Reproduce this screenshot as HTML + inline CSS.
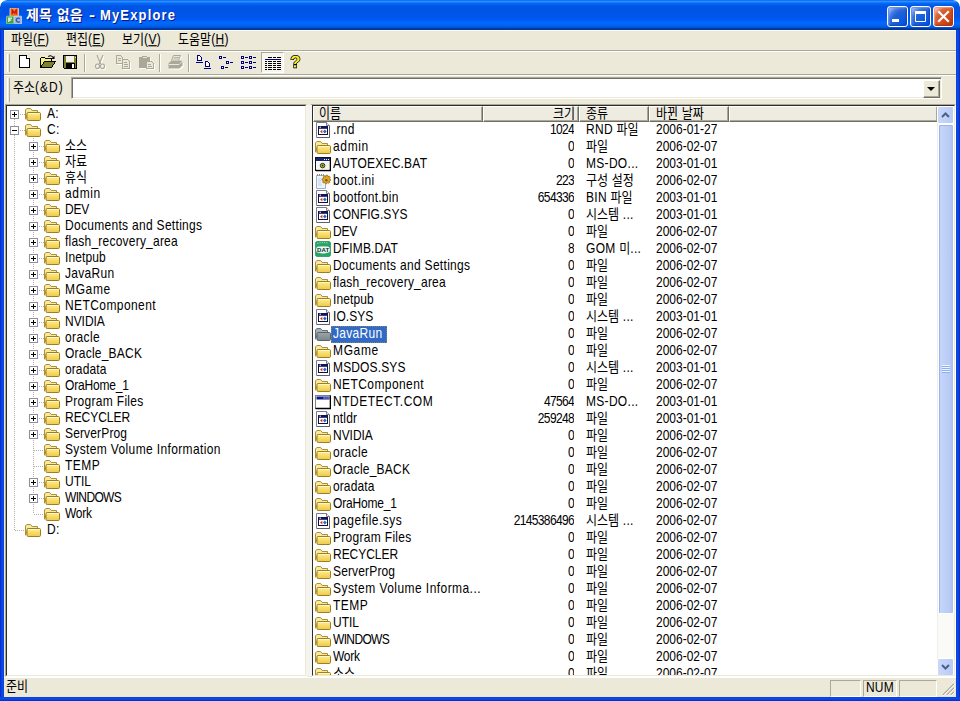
<!DOCTYPE html>
<html lang="ko">
<head>
<meta charset="utf-8">
<title>제목 없음 - MyExplore</title>
<style>
html,body{margin:0;padding:0;background:#fff}
body{width:960px;height:701px;overflow:hidden;position:relative;font-family:"Liberation Sans","Noto Sans CJK KR",sans-serif;font-size:12px;line-height:14px;color:#000;letter-spacing:.3px}
.l{display:inline-block;white-space:pre;line-height:14px;transform:scaleY(1.18);transform-origin:0 11.2px}
svg{display:block;overflow:visible}
#defs{position:absolute;width:0;height:0}
.kt{display:inline-block;white-space:pre;font-family:"Liberation Sans","Noto Sans CJK KR",sans-serif;font-size:12px;line-height:14px;letter-spacing:0;transform:scaleY(1.12);transform-origin:0 11px}
.ks{font-size:0;letter-spacing:0}
#win{position:absolute;left:0;top:0;width:960px;height:701px;background:#ECE9D8;overflow:hidden;border-radius:7px 7px 0 0}
#win>div{position:absolute}
/* frame */
#fl{left:0;top:30px;width:4px;height:671px;background:linear-gradient(90deg,#0527C8 0,#0A3FDF 30%,#0B4BEA 60%,#0840DA 100%)}
#fr{left:956px;top:30px;width:4px;height:671px;background:linear-gradient(90deg,#0840DA 0,#0B4BEA 40%,#0A3FDF 70%,#0527C8 100%)}
#fb{left:0;top:697px;width:960px;height:4px;background:linear-gradient(180deg,#0840DA 0,#0B4BEA 40%,#0A3FDF 70%,#0527C8 100%)}
/* title bar */
#tb{left:0;top:0;width:960px;height:30px;border-radius:7px 7px 0 0;
background:linear-gradient(180deg,#0058EE 0%,#3593FF 4%,#288EFF 6%,#127DFF 8%,#036FFC 10%,#0262EE 14%,#0057E5 20%,#0054E3 24%,#0055EB 56%,#005BF5 66%,#026AFE 76%,#0062EF 86%,#0052D6 92%,#0040AB 94%,#003092 100%)}
#tb .app{position:absolute;left:6px;top:8px}
#tb h1{position:absolute;left:26px;top:7px;margin:0;font-size:13px;line-height:18px;font-weight:bold;color:#fff;white-space:nowrap;letter-spacing:1.15px;text-shadow:1px 1px 0 #0A1883}
#tb h1 .l{line-height:16px;transform:scaleY(1.1);transform-origin:0 12px;margin-left:6px}
#tb h1 .kt{font-size:14px;line-height:16px;font-weight:bold;letter-spacing:0;transform:none}
#tb h1 .ks+.kt{margin-left:5px}
#tb h1 .hy{transform:scale(1.4,1.1);transform-origin:0 12px;margin-right:0}
.cb{position:absolute;top:6px;width:21px;height:21px;box-sizing:border-box;border:1px solid #fff;border-radius:3px;
background:radial-gradient(circle at 90% 90%,#0054E9 0%,#2263D5 55%,#4479E4 70%,#A3BBEC 90%,#fff 100%);box-shadow:inset -1px -1px 2px #1840B8,inset 1px 1px 1px #6C95F0}
.cb.min{left:887px}.cb.max{left:910px}
.cb.cls{left:933px;background:radial-gradient(circle at 90% 90%,#C53A0A 0%,#DA5523 55%,#D46A42 70%,#FFC6AE 90%,#fff 100%);box-shadow:inset -1px -1px 2px #B03010,inset 1px 1px 1px #F0A080}
.cb svg{position:absolute;left:0;top:0}
/* menu */
#mb{left:4px;top:30px;width:952px;height:20px;box-shadow:inset 0 1px 0 #fff}
#mb>span{position:absolute;top:2px;white-space:nowrap}
/* bars */
.etch{left:4px;width:952px;height:1px;background:#ACA899;box-shadow:0 1px 0 #fff}
.grip{position:absolute;left:3px;width:1px;background:#fff;box-shadow:2px 0 0 #ACA899,1px 0 0 #ECE9D8}
#tool{left:4px;top:52px;width:952px;height:22px}
#tool svg{position:absolute}
.pressed{position:absolute;top:0;width:23px;height:21px;box-sizing:border-box;background:#F6F5EE;border:1px solid;border-color:#ACA899 #fff #fff #ACA899}
.sep{position:absolute;top:2px;width:1px;height:18px;background:#ACA899;box-shadow:1px 0 0 #fff}
#addr{left:4px;top:76px;width:952px;height:28px}
#addr label{position:absolute;left:9px;top:5px;white-space:nowrap}
#addr label .l{letter-spacing:1px}
u{text-decoration-thickness:1px;text-underline-offset:1.3px}
#mb .l{position:relative;top:1px}#mb .kt{position:relative;top:1px}
#combo{position:absolute;left:67px;top:1px;width:871px;height:22px;box-sizing:border-box;background:#fff;border:1px solid;border-color:#ACA899 #fff #fff #ACA899;box-shadow:inset 1px 1px 0 #716F64,inset -1px -1px 0 #ECE9D8}
#combo b{position:absolute;right:1px;top:2px;width:15px;height:16px;background:#ECE9D8;border:1px solid;border-color:#fff #716F64 #716F64 #fff;box-shadow:inset -1px -1px 0 #ACA899}
#combo b:after{content:"";position:absolute;left:3px;top:6px;border:4px solid transparent;border-top-color:#000;border-bottom:0}
/* panes */
.pane{box-sizing:border-box;background:#fff;border:1px solid;border-color:#ACA899 #fff #fff #ACA899;overflow:hidden}
.pane>.in{position:absolute;left:0;top:0;right:0;bottom:0;border:1px solid;border-color:#2E2D29 #ECE9D8 #ECE9D8 #2E2D29;overflow:hidden}
#tree{left:5px;top:104px;width:302px;height:573px}
#list{left:311px;top:104px;width:645px;height:573px}
.trow{position:relative;height:16px;white-space:nowrap}
.trow>span{position:absolute;top:0}
.xb{top:4px!important;width:9px;height:9px;box-sizing:border-box;border:1px solid #8F909C;background:#fff}
.xb .h{position:absolute;left:1px;top:3px;width:5px;height:1px;background:#000}
.xb .v{position:absolute;left:3px;top:1px;width:1px;height:5px;background:#000}
.tt{top:1px!important;line-height:14px}
.tl{position:absolute;background-image:linear-gradient(#B0B0B0 50%,transparent 50%);background-size:1px 2px;width:1px}
.thl{position:absolute;height:1px;background-image:linear-gradient(90deg,#B0B0B0 50%,transparent 50%);background-size:2px 1px}
/* list */
#hdr{position:absolute;left:0;top:0;width:625px;height:16px;background:#EEECE1}
#hdr>span{position:absolute;top:0;height:16px;line-height:14px;padding-top:0;box-sizing:border-box;border:1px solid;border-color:#fff #716F64 #716F64 #fff;box-shadow:inset -1px -1px 0 #ACA899;white-space:nowrap}
#rows{position:absolute;left:0;top:16px;width:626px}
.lrow{position:relative;height:17px;white-space:nowrap;line-height:14px}
.lrow>span{position:absolute;top:0;height:17px;overflow:hidden;padding-top:1px;box-sizing:border-box}
.li{left:2px;padding:0!important}
.c1{left:18px;width:152px}.c1{padding:0!important}.c1 .nm{display:inline-block;padding:1px 5px 0 2px;height:17px;box-sizing:border-box}
.c2{left:170px;width:91px;text-align:right;letter-spacing:-.65px}
.c3{left:273px;width:60px}
.c4{left:343px;width:75px;letter-spacing:0}
.sel .nm{background:#316AC5;color:#fff;outline:1px dotted rgba(206,149,58,.55);outline-offset:-1px}
/* scrollbar */
#sb{position:absolute;right:0;top:0;width:17px;bottom:0;background:#FAFAF6;box-shadow:inset 1px 0 0 #F0EFE8}
.sbtn{position:absolute;left:1px;width:15px;height:16px;border-radius:2px;background:linear-gradient(90deg,#C9D7FB,#B9CBF5);border:1px solid #fff;box-sizing:content-box;margin:-1px 0 0 -1px}
#thumb{position:absolute;left:1px;top:18px;width:14px;height:488px;border-radius:2px;background:linear-gradient(90deg,#C8D6FB,#B7CAF5 80%,#A9BEEF);border:1px solid #fff;box-shadow:1px 1px 0 #9DB4E8 inset}
#thumb i{position:absolute;left:3px;top:240px;width:8px;height:8px;background:linear-gradient(#EEF4FE 50%,#8CB0F8 50%);background-size:8px 2px}
#split{left:306px;top:105px;width:6px;height:571px;background:#F5F4EE}
/* status */
#st{left:4px;top:677px;width:952px;height:20px;box-shadow:inset 0 1px 0 #fff}
#st .p{position:absolute;top:3px;height:17px;box-sizing:border-box;border:1px solid;border-color:#ACA899 #fff #fff #ACA899}
#st .t{position:absolute;left:2px;top:3px}
</style>
</head>
<body>
<svg id="defs" aria-hidden="true"><defs>
<linearGradient id="gf" x1="0" y1="0" x2="0" y2="1"><stop offset="0" stop-color="#FDEF8E"/><stop offset="1" stop-color="#EFC84A"/></linearGradient>
<linearGradient id="gfs" x1="0" y1="0" x2="0" y2="1"><stop offset="0" stop-color="#9AA6A8"/><stop offset="1" stop-color="#7A878A"/></linearGradient>
<radialGradient id="gdat" cx=".5" cy=".55" r=".45"><stop offset="0" stop-color="#fff"/><stop offset=".6" stop-color="#E6F8EE"/><stop offset="1" stop-color="#2FA868" stop-opacity="0"/></radialGradient>
<symbol id="i-fold" viewBox="0 0 16 16">
 <path d="M.5 13.2V4L1.8 2.5H5.6L7.2 4.5H12.5V6.5H3Z" fill="#F9EAA2" stroke="#AC8E34"/>
 <rect x="2" y="6.5" width="13.5" height="8" rx="1.2" fill="url(#gf)" stroke="#9E7E22"/>
 <path d="M3 7.5H14.5" stroke="#FFFCD8" opacity=".8"/>
</symbol>
<symbol id="i-folds" viewBox="0 0 16 16">
 <path d="M.5 13.2V4L1.8 2.5H5.6L7.2 4.5H12.5V6.5H3Z" fill="#A7B2B4" stroke="#677079"/>
 <rect x="2" y="6.5" width="13.5" height="8" rx="1.2" fill="url(#gfs)" stroke="#5A636B"/>
</symbol>
<symbol id="i-sys" viewBox="0 0 16 16">
 <path d="M1.5 .5H11.5L14.5 3.5V15.5H1.5Z" fill="#fff" stroke="#7C7C8C"/>
 <path d="M11.5 .5V3.5H14.5" fill="#F0F0F0" stroke="#7C7C8C"/>
 <path d="M14.5 4V15.5H2" fill="none" stroke="#5E5E6C"/>
 <rect x="3.5" y="4.5" width="9" height="8" fill="#fff" stroke="#101038"/>
 <rect x="3" y="4" width="10" height="2.8" fill="#121458"/>
 <rect x="4.6" y="4.6" width="1.2" height="1.2" fill="#fff"/>
 <path d="M7.4 7.8L5 9.6L7.4 11.4Z" fill="#D23A1E"/><path d="M9.8 7.6L11.7 9.6L9.8 11.6L8 9.6Z" fill="#2A62C8"/>
</symbol>
<symbol id="i-bat" viewBox="0 0 16 16">
 <rect x=".5" y="1.5" width="15" height="13" fill="#fff" stroke="#111"/>
 <path d="M1 14.5H16M15.5 2V15" stroke="#000" stroke-width="1.6"/>
 <rect x="1" y="2" width="14" height="3" fill="#1A2478"/>
 <path d="M9 3.5h1M11 3.5h1M13 3.5h1" stroke="#fff"/>
 <rect x="2" y="6" width="12" height="7.5" fill="#F4F4F0"/>
 <circle cx="7.6" cy="9.6" r="2.3" fill="#A9B82C" stroke="#1E2C08" stroke-width=".9"/><circle cx="7.6" cy="9.6" r=".8" fill="#1A2406"/>
</symbol>
<symbol id="i-ini" viewBox="0 0 16 16">
 <path d="M1.5 2.5H10.5V15.5H1.5Z" fill="#EEF4FB" stroke="#9DB3CC"/>
 <path d="M3 6H9M3 8H7M3 10H6M3 12H7" stroke="#C4D4E8"/>
 <path d="M2.5 1V3M4.5 1V3M6.5 1V3M8.5 1V3" stroke="#A08A78"/>
 <g transform="translate(11.3 7.3) scale(1.15) translate(-11 -8.6)"><path d="M11.2 4l1 .2.3 1.2 1.2-.3.7.8-.6 1.1 1 .7-.1 1-1.1.5.4 1.1-.8.8-1.1-.5-.7 1h-1l-.6-1-1.2.4-.7-.8.5-1.1-1-.7.1-1 1.1-.5-.3-1.2.8-.7 1.1.5z" fill="#DDA52A" stroke="#9A6A10" stroke-width=".7"/>
 <circle cx="11" cy="8.6" r="1.1" fill="#8A5A08"/></g>
</symbol>
<symbol id="i-dat" viewBox="0 0 16 16">
 <rect x=".3" y=".3" width="15.4" height="15.4" rx="2.6" fill="#27A566" stroke="#178A50" stroke-width=".6"/>
 <path d="M2.3 2.3h1M4.6 1.8h1M6.9 1.6h1M9.2 1.6h1M11.5 1.9h1" stroke="#B9F4D6" stroke-width=".9"/>
 <ellipse cx="8" cy="8.8" rx="7.3" ry="5" fill="url(#gdat)"/>
 <rect x="1.2" y="5.6" width="13.6" height="6.2" rx="2.5" fill="#F4FCF7"/>
 <text x="8.15" y="11.1" font-size="6.1" font-weight="bold" text-anchor="middle" letter-spacing="0" fill="#062A1A" style="font-family:'Liberation Sans',sans-serif">DAT</text>
</symbol>
<symbol id="i-com" viewBox="0 0 16 16">
 <rect x=".5" y="1.5" width="15" height="13" fill="#fff" stroke="#808080"/>
 <path d="M.5 14.5H16M15.5 1.5V15" stroke="#000" stroke-width="1.6"/>
 <rect x="1.5" y="2.5" width="13" height="3" fill="#0A1A88"/>
 <path d="M8.5 4h1.2M10.5 4h1.2M12.5 4h1.2" stroke="#fff" stroke-width="1.1"/>
</symbol>
<symbol id="i-mfc" viewBox="0 0 16 16">
 <rect x="4" y="0" width="8.5" height="8.5" rx="1" fill="#E8782A" stroke="#F8D8B8" stroke-width=".8"/>
 <path d="M6.2 6.5V2.3L8.2 5l2-2.7V6.5" fill="none" stroke="#D01010" stroke-width="1.3"/>
 <rect x=".4" y="8.2" width="7.6" height="7.6" rx="1" fill="#3FA24A" stroke="#A8D8A8" stroke-width=".8"/>
 <path d="M2.8 14V10.2H6M2.8 12h2.4" fill="none" stroke="#E8F8E0" stroke-width="1.3"/>
 <rect x="8.2" y="8.2" width="7.6" height="7.6" rx="1" fill="#9FB4D8" stroke="#D8E0F0" stroke-width=".8"/>
 <path d="M13.8 10.7Q12 9.6 10.8 10.8T10.8 13.4T13.8 13.4" fill="none" stroke="#2858B8" stroke-width="1.3"/>
</symbol>
</defs></svg>
<div id="win">
 <div id="tb">
  <svg class="app" width="16" height="16"><use href="#i-mfc"/></svg>
  <h1><span class="kt">제목</span><span class="ks"> </span><span class="kt">없음</span><span class="ks"> </span><span class="l hy">-</span><span class="ks"> </span><span class="l">MyExplore</span></h1>
  <div class="cb min"><svg width="19" height="19"><rect x="4" y="12" width="7" height="3" fill="#fff"/></svg></div>
  <div class="cb max"><svg width="19" height="19"><path d="M4.5 5.5h10v9h-10z M4.5 6.5h10" fill="none" stroke="#fff" stroke-width="1"/><rect x="4" y="4" width="11" height="3" fill="#fff"/></svg></div>
  <div class="cb cls"><svg width="19" height="19"><path d="M5 5l9 9M14 5l-9 9" stroke="#fff" stroke-width="2.2" stroke-linecap="square"/></svg></div>
 </div>
 <div id="fl"></div><div id="fr"></div><div id="fb"></div>
 <div id="mb">
  <span style="left:7px"><span class="kt">파일</span><span class="l">(<u>F</u>)</span></span>
  <span style="left:62px"><span class="kt">편집</span><span class="l">(<u>E</u>)</span></span>
  <span style="left:118px"><span class="kt">보기</span><span class="l">(<u>V</u>)</span></span>
  <span style="left:174px"><span class="kt">도움말</span><span class="l">(<u>H</u>)</span></span>
 </div>
 <div class="etch" style="top:50px"></div>
 <div id="tool">
  <i class="grip" style="top:2px;height:18px"></i>
  <svg style="left:13px;top:3px" width="16" height="15" shape-rendering="crispEdges"><path d="M2.5 .5H9.5L12.5 3.5V12.5H2.5Z" fill="#fff" stroke="#000"/><path d="M9.5 .5V3.5H12.5" fill="#fff" stroke="#000"/></svg><svg style="left:36px;top:3px" width="16" height="15" shape-rendering="crispEdges"><path d="M.5 12.5V3.5L1.5 2.5H4.5L5.5 3.5H11.5V6.5H4.5L.5 12.5" fill="#F4F07A" stroke="#000"/><path d="M.5 12.5L4.5 6.5H15.5L11.5 12.5Z" fill="#80802A" stroke="#000"/></svg><svg style="left:36px;top:3px" width="16" height="15"><path d="M8.3 1.6Q10.5 -.3 13.2 2.3" fill="none" stroke="#000" stroke-width="1.1"/><path d="M14.5 .8V4H11.3Z" fill="#000"/></svg><svg style="left:59px;top:3px" width="16" height="15" shape-rendering="crispEdges"><path d="M.5 .5H13.5V13.5H1.5L.5 12.5Z" fill="#80802A" stroke="#000"/><rect x="3" y="1" width="8" height="6" fill="#F2F2EA"/><rect x="11.5" y="1.5" width="1" height="1" fill="#E8E8D8"/><rect x="3" y="8" width="9" height="5" fill="#000"/><rect x="9" y="9" width="2" height="3.5" fill="#fff"/></svg><i class="sep" style="left:80px"></i><svg style="left:88px;top:3px" width="17" height="16"><g transform="translate(1,1)" style="color:#fff"><path d="M5 0L8.8 9M11 0L7.2 9" fill="none" stroke="currentColor" stroke-width="1.2"/><ellipse cx="5.5" cy="11.3" rx="2" ry="2.3" fill="none" stroke="currentColor" stroke-width="1.2"/><ellipse cx="10.5" cy="11.3" rx="2" ry="2.3" fill="none" stroke="currentColor" stroke-width="1.2"/></g><g style="color:#ACA899"><path d="M5 0L8.8 9M11 0L7.2 9" fill="none" stroke="currentColor" stroke-width="1.2"/><ellipse cx="5.5" cy="11.3" rx="2" ry="2.3" fill="none" stroke="currentColor" stroke-width="1.2"/><ellipse cx="10.5" cy="11.3" rx="2" ry="2.3" fill="none" stroke="currentColor" stroke-width="1.2"/></g></svg><svg style="left:111px;top:3px" width="17" height="16" shape-rendering="crispEdges"><g transform="translate(1,1)" style="color:#fff"><path d="M1.5 .5H5.5L7.5 2.5V8.5H1.5Z" fill="#ECE9D8" stroke="currentColor"/><path d="M3 3.5H6M3 5.5H6" stroke="currentColor"/><path d="M7.5 4.5H12.5L14.5 6.5V13.5H7.5Z" fill="#ECE9D8" stroke="currentColor"/><path d="M9 7.5H12M9 9.5H13M9 11.5H13" stroke="currentColor"/></g><g style="color:#ACA899"><path d="M1.5 .5H5.5L7.5 2.5V8.5H1.5Z" fill="#ECE9D8" stroke="currentColor"/><path d="M3 3.5H6M3 5.5H6" stroke="currentColor"/><path d="M7.5 4.5H12.5L14.5 6.5V13.5H7.5Z" fill="#ECE9D8" stroke="currentColor"/><path d="M9 7.5H12M9 9.5H13M9 11.5H13" stroke="currentColor"/></g></svg><svg style="left:134px;top:3px" width="17" height="16" shape-rendering="crispEdges"><g transform="translate(1,1)" style="color:#fff"><path d="M1 2H12V13H1Z" fill="currentColor"/><path d="M4 .5H9V3H4Z" fill="currentColor"/><path d="M4.5 2.5H8.5" stroke="#ECE9D8"/><path d="M8.5 6.5H13.5L15.5 8.5V13.5H8.5Z" fill="#ECE9D8" stroke="currentColor"/><path d="M10 9.5H13M10 11.5H14" stroke="currentColor"/></g><g style="color:#ACA899"><path d="M1 2H12V13H1Z" fill="currentColor"/><path d="M4 .5H9V3H4Z" fill="currentColor"/><path d="M4.5 2.5H8.5" stroke="#ECE9D8"/><path d="M8.5 6.5H13.5L15.5 8.5V13.5H8.5Z" fill="#ECE9D8" stroke="currentColor"/><path d="M10 9.5H13M10 11.5H14" stroke="currentColor"/></g></svg><i class="sep" style="left:155px"></i><svg style="left:163px;top:3px" width="17" height="16"><g transform="translate(1,1)" style="color:#fff"><path d="M4.5 5.5L6.5 .5H13.5L11.5 5.5" fill="#ECE9D8" stroke="currentColor"/><path d="M7 2.5H12M6.3 4H11.4" stroke="currentColor" stroke-width=".8"/><path d="M1.5 8.5L4.5 5.5H14.5L15.5 7.5V10.5L12.5 13.5H1.5Z" fill="currentColor"/><path d="M2 9.5H12" stroke="#ECE9D8"/><path d="M12.3 9.2L15 6.8" stroke="#ECE9D8" stroke-width=".8"/></g><g style="color:#ACA899"><path d="M4.5 5.5L6.5 .5H13.5L11.5 5.5" fill="#ECE9D8" stroke="currentColor"/><path d="M7 2.5H12M6.3 4H11.4" stroke="currentColor" stroke-width=".8"/><path d="M1.5 8.5L4.5 5.5H14.5L15.5 7.5V10.5L12.5 13.5H1.5Z" fill="currentColor"/><path d="M2 9.5H12" stroke="#ECE9D8"/><path d="M12.3 9.2L15 6.8" stroke="#ECE9D8" stroke-width=".8"/></g></svg><i class="sep" style="left:184px"></i><svg style="left:192px;top:3px" width="16" height="15" shape-rendering="crispEdges"><path d="M1.5 0.5H3.5L5.5 2.5V5.5H1.5Z" fill="#fff" stroke="#00007B"/><path d="M0 7.5H7" stroke="#00007B"/><path d="M9.5 6.5H11.5L13.5 8.5V11.5H9.5Z" fill="#fff" stroke="#00007B"/><path d="M8 13.5H15" stroke="#00007B"/></svg><svg style="left:215px;top:3px" width="16" height="15" shape-rendering="crispEdges"><rect x="0.5" y="1.5" width="2" height="2" fill="#fff" stroke="#00007B"/><path d="M4 2.5h3" stroke="#00007B"/><rect x="7.5" y="6.5" width="2" height="2" fill="#fff" stroke="#00007B"/><path d="M11 7.5h3" stroke="#00007B"/><rect x="2.5" y="11.5" width="2" height="2" fill="#fff" stroke="#00007B"/><path d="M6 12.5h3" stroke="#00007B"/></svg><svg style="left:237px;top:3px" width="16" height="15" shape-rendering="crispEdges"><rect x="0.5" y="1.5" width="2" height="2" fill="#fff" stroke="#00007B"/><path d="M4 2.5h3" stroke="#00007B"/><rect x="8.5" y="1.5" width="2" height="2" fill="#fff" stroke="#00007B"/><path d="M12 2.5h3" stroke="#00007B"/><rect x="0.5" y="6.5" width="2" height="2" fill="#fff" stroke="#00007B"/><path d="M4 7.5h3" stroke="#00007B"/><rect x="8.5" y="6.5" width="2" height="2" fill="#fff" stroke="#00007B"/><path d="M12 7.5h3" stroke="#00007B"/><rect x="0.5" y="11.5" width="2" height="2" fill="#fff" stroke="#00007B"/><path d="M4 12.5h3" stroke="#00007B"/><rect x="8.5" y="11.5" width="2" height="2" fill="#fff" stroke="#00007B"/><path d="M12 12.5h3" stroke="#00007B"/></svg><i class="pressed" style="left:257px"></i><svg style="left:261px;top:4px" width="16" height="16" shape-rendering="crispEdges"><path d="M3 1.5h3.5M7.5 1.5h3.5M12 1.5h3.5" stroke="#000" stroke-width="1.3"/><path d="M0 3.5H16" stroke="#00007B"/><path d="M0 5.5h1.5M3 5.5h3.5M7.5 5.5h3.5M12 5.5h3.5" stroke="#000"/><path d="M0 7.5h1.5M3 7.5h3.5M7.5 7.5h3.5M12 7.5h3.5" stroke="#000"/><path d="M0 9.5h1.5M3 9.5h3.5M7.5 9.5h3.5M12 9.5h3.5" stroke="#000"/><path d="M0 11.5h1.5M3 11.5h3.5M7.5 11.5h3.5M12 11.5h3.5" stroke="#000"/><path d="M0 13.5h1.5M3 13.5h3.5M7.5 13.5h3.5M12 13.5h3.5" stroke="#000"/></svg><svg style="left:284px;top:2px" width="16" height="18"><path d="M11.71 4.98Q11.71 5.79 11.35 6.43Q10.99 7.07 10 7.77L9.37 8.23Q8.81 8.64 8.53 9.05Q8.25 9.47 8.23 9.96H6.01Q6.06 9.12 6.49 8.45Q6.91 7.79 7.74 7.21Q8.63 6.59 9 6.12Q9.36 5.66 9.36 5.08Q9.36 4.35 8.89 3.93Q8.41 3.51 7.53 3.51Q6.69 3.51 6.12 4Q5.55 4.49 5.45 5.29L3.09 5.19Q3.31 3.51 4.47 2.57Q5.64 1.63 7.5 1.63Q9.46 1.63 10.59 2.52Q11.71 3.41 11.71 4.98ZM5.94 13.5V11.26H8.34V13.5Z" fill="#F5EB28" stroke="#000" stroke-width="1.3" paint-order="stroke"/></svg>
 </div>
 <div class="etch" style="top:74px"></div>
 <div id="addr">
  <i class="grip" style="top:2px;height:24px"></i>
  <label><span class="kt">주소</span><span class="l">(&amp;D)</span></label>
  <div id="combo"><b></b></div>
 </div>
 <div id="tree" class="pane"><div class="in">
<i class="tl" style="left:7px;top:13px;height:411px"></i><i class="tl" style="left:26px;top:32px;height:376px"></i><i class="thl" style="left:13px;top:8px;width:5px"></i><i class="thl" style="left:13px;top:24px;width:5px"></i><i class="thl" style="left:32px;top:40px;width:5px"></i><i class="thl" style="left:32px;top:56px;width:5px"></i><i class="thl" style="left:32px;top:72px;width:5px"></i><i class="thl" style="left:32px;top:88px;width:5px"></i><i class="thl" style="left:32px;top:104px;width:5px"></i><i class="thl" style="left:32px;top:120px;width:5px"></i><i class="thl" style="left:32px;top:136px;width:5px"></i><i class="thl" style="left:32px;top:152px;width:5px"></i><i class="thl" style="left:32px;top:168px;width:5px"></i><i class="thl" style="left:32px;top:184px;width:5px"></i><i class="thl" style="left:32px;top:200px;width:5px"></i><i class="thl" style="left:32px;top:216px;width:5px"></i><i class="thl" style="left:32px;top:232px;width:5px"></i><i class="thl" style="left:32px;top:248px;width:5px"></i><i class="thl" style="left:32px;top:264px;width:5px"></i><i class="thl" style="left:32px;top:280px;width:5px"></i><i class="thl" style="left:32px;top:296px;width:5px"></i><i class="thl" style="left:32px;top:312px;width:5px"></i><i class="thl" style="left:32px;top:328px;width:5px"></i><i class="thl" style="left:27px;top:344px;width:10px"></i><i class="thl" style="left:27px;top:360px;width:10px"></i><i class="thl" style="left:32px;top:376px;width:5px"></i><i class="thl" style="left:32px;top:392px;width:5px"></i><i class="thl" style="left:27px;top:408px;width:10px"></i><i class="thl" style="left:8px;top:424px;width:10px"></i>
<div class="trow"><span class="xb" style="left:3px"><i class="h"></i><i class="v"></i></span><span class="ti" style="left:18px"><svg class="i16" width="16" height="16"><use href="#i-fold"/></svg></span><span class="tt" style="left:40px"><span class="l">A:</span></span></div>
<div class="trow"><span class="xb" style="left:3px"><i class="h"></i></span><span class="ti" style="left:18px"><svg class="i16" width="16" height="16"><use href="#i-fold"/></svg></span><span class="tt" style="left:40px"><span class="l">C:</span></span></div>
<div class="trow"><span class="xb" style="left:22px"><i class="h"></i><i class="v"></i></span><span class="ti" style="left:37px"><svg class="i16" width="16" height="16"><use href="#i-fold"/></svg></span><span class="tt" style="left:58px"><span class="kt">소스</span></span></div>
<div class="trow"><span class="xb" style="left:22px"><i class="h"></i><i class="v"></i></span><span class="ti" style="left:37px"><svg class="i16" width="16" height="16"><use href="#i-fold"/></svg></span><span class="tt" style="left:58px"><span class="kt">자료</span></span></div>
<div class="trow"><span class="xb" style="left:22px"><i class="h"></i><i class="v"></i></span><span class="ti" style="left:37px"><svg class="i16" width="16" height="16"><use href="#i-fold"/></svg></span><span class="tt" style="left:58px"><span class="kt">휴식</span></span></div>
<div class="trow"><span class="xb" style="left:22px"><i class="h"></i><i class="v"></i></span><span class="ti" style="left:37px"><svg class="i16" width="16" height="16"><use href="#i-fold"/></svg></span><span class="tt" style="left:58px;letter-spacing:0.64px"><span class="l">admin</span></span></div>
<div class="trow"><span class="xb" style="left:22px"><i class="h"></i><i class="v"></i></span><span class="ti" style="left:37px"><svg class="i16" width="16" height="16"><use href="#i-fold"/></svg></span><span class="tt" style="left:58px;letter-spacing:-0.15px"><span class="l">DEV</span></span></div>
<div class="trow"><span class="xb" style="left:22px"><i class="h"></i><i class="v"></i></span><span class="ti" style="left:37px"><svg class="i16" width="16" height="16"><use href="#i-fold"/></svg></span><span class="tt" style="left:58px"><span class="l">Documents and Settings</span></span></div>
<div class="trow"><span class="xb" style="left:22px"><i class="h"></i><i class="v"></i></span><span class="ti" style="left:37px"><svg class="i16" width="16" height="16"><use href="#i-fold"/></svg></span><span class="tt" style="left:58px;letter-spacing:0.22px"><span class="l">flash_recovery_area</span></span></div>
<div class="trow"><span class="xb" style="left:22px"><i class="h"></i><i class="v"></i></span><span class="ti" style="left:37px"><svg class="i16" width="16" height="16"><use href="#i-fold"/></svg></span><span class="tt" style="left:58px;letter-spacing:0.1px"><span class="l">Inetpub</span></span></div>
<div class="trow"><span class="xb" style="left:22px"><i class="h"></i><i class="v"></i></span><span class="ti" style="left:37px"><svg class="i16" width="16" height="16"><use href="#i-fold"/></svg></span><span class="tt" style="left:58px"><span class="l">JavaRun</span></span></div>
<div class="trow"><span class="xb" style="left:22px"><i class="h"></i><i class="v"></i></span><span class="ti" style="left:37px"><svg class="i16" width="16" height="16"><use href="#i-fold"/></svg></span><span class="tt" style="left:58px;letter-spacing:0.63px"><span class="l">MGame</span></span></div>
<div class="trow"><span class="xb" style="left:22px"><i class="h"></i><i class="v"></i></span><span class="ti" style="left:37px"><svg class="i16" width="16" height="16"><use href="#i-fold"/></svg></span><span class="tt" style="left:58px;letter-spacing:0.41px"><span class="l">NETComponent</span></span></div>
<div class="trow"><span class="xb" style="left:22px"><i class="h"></i><i class="v"></i></span><span class="ti" style="left:37px"><svg class="i16" width="16" height="16"><use href="#i-fold"/></svg></span><span class="tt" style="left:58px;letter-spacing:-0.04px"><span class="l">NVIDIA</span></span></div>
<div class="trow"><span class="xb" style="left:22px"><i class="h"></i><i class="v"></i></span><span class="ti" style="left:37px"><svg class="i16" width="16" height="16"><use href="#i-fold"/></svg></span><span class="tt" style="left:58px;letter-spacing:0.39px"><span class="l">oracle</span></span></div>
<div class="trow"><span class="xb" style="left:22px"><i class="h"></i><i class="v"></i></span><span class="ti" style="left:37px"><svg class="i16" width="16" height="16"><use href="#i-fold"/></svg></span><span class="tt" style="left:58px;letter-spacing:0.22px"><span class="l">Oracle_BACK</span></span></div>
<div class="trow"><span class="xb" style="left:22px"><i class="h"></i><i class="v"></i></span><span class="ti" style="left:37px"><svg class="i16" width="16" height="16"><use href="#i-fold"/></svg></span><span class="tt" style="left:58px;letter-spacing:0.1px"><span class="l">oradata</span></span></div>
<div class="trow"><span class="xb" style="left:22px"><i class="h"></i><i class="v"></i></span><span class="ti" style="left:37px"><svg class="i16" width="16" height="16"><use href="#i-fold"/></svg></span><span class="tt" style="left:58px;letter-spacing:-0.19px"><span class="l">OraHome_1</span></span></div>
<div class="trow"><span class="xb" style="left:22px"><i class="h"></i><i class="v"></i></span><span class="ti" style="left:37px"><svg class="i16" width="16" height="16"><use href="#i-fold"/></svg></span><span class="tt" style="left:58px"><span class="l">Program Files</span></span></div>
<div class="trow"><span class="xb" style="left:22px"><i class="h"></i><i class="v"></i></span><span class="ti" style="left:37px"><svg class="i16" width="16" height="16"><use href="#i-fold"/></svg></span><span class="tt" style="left:58px;letter-spacing:-0.03px"><span class="l">RECYCLER</span></span></div>
<div class="trow"><span class="xb" style="left:22px"><i class="h"></i><i class="v"></i></span><span class="ti" style="left:37px"><svg class="i16" width="16" height="16"><use href="#i-fold"/></svg></span><span class="tt" style="left:58px;letter-spacing:0.15px"><span class="l">ServerProg</span></span></div>
<div class="trow"><span class="ti" style="left:37px"><svg class="i16" width="16" height="16"><use href="#i-fold"/></svg></span><span class="tt" style="left:58px;letter-spacing:0.36px"><span class="l">System Volume Information</span></span></div>
<div class="trow"><span class="ti" style="left:37px"><svg class="i16" width="16" height="16"><use href="#i-fold"/></svg></span><span class="tt" style="left:58px;letter-spacing:0.45px"><span class="l">TEMP</span></span></div>
<div class="trow"><span class="xb" style="left:22px"><i class="h"></i><i class="v"></i></span><span class="ti" style="left:37px"><svg class="i16" width="16" height="16"><use href="#i-fold"/></svg></span><span class="tt" style="left:58px;letter-spacing:0px"><span class="l">UTIL</span></span></div>
<div class="trow"><span class="xb" style="left:22px"><i class="h"></i><i class="v"></i></span><span class="ti" style="left:37px"><svg class="i16" width="16" height="16"><use href="#i-fold"/></svg></span><span class="tt" style="left:58px;letter-spacing:-0.65px"><span class="l">WINDOWS</span></span></div>
<div class="trow"><span class="ti" style="left:37px"><svg class="i16" width="16" height="16"><use href="#i-fold"/></svg></span><span class="tt" style="left:58px;letter-spacing:-0.3px"><span class="l">Work</span></span></div>
<div class="trow"><span class="ti" style="left:18px"><svg class="i16" width="16" height="16"><use href="#i-fold"/></svg></span><span class="tt" style="left:40px"><span class="l">D:</span></span></div>
 </div></div>
 <div id="list" class="pane"><div class="in">
  <div id="hdr">
   <span style="left:0;width:170px;padding-left:5px"><span class="kt">이름</span></span>
   <span style="left:170px;width:96px;text-align:right;padding-right:3px"><span class="kt">크기</span></span>
   <span style="left:266px;width:70px;padding-left:6px"><span class="kt">종류</span></span>
   <span style="left:336px;width:80px;padding-left:6px"><span class="kt">바뀐</span> <span class="kt">날짜</span></span>
   <span style="left:416px;width:209px"></span>
  </div>
  <div id="rows">
<div class="lrow"><span class="li"><svg class="i16" width="16" height="16"><use href="#i-sys"/></svg></span><span class="c1"><span class="nm" style="letter-spacing:0.22px"><span class="l">.rnd</span></span></span><span class="c2"><span class="l">1024</span></span><span class="c3"><span class="l">RND </span><span class="kt">파일</span></span><span class="c4"><span class="l">2006-01-27</span></span></div>
<div class="lrow"><span class="li"><svg class="i16" width="16" height="16"><use href="#i-fold"/></svg></span><span class="c1"><span class="nm" style="letter-spacing:0.64px"><span class="l">admin</span></span></span><span class="c2"><span class="l">0</span></span><span class="c3"><span class="kt">파일</span></span><span class="c4"><span class="l">2006-02-07</span></span></div>
<div class="lrow"><span class="li"><svg class="i16" width="16" height="16"><use href="#i-bat"/></svg></span><span class="c1"><span class="nm" style="letter-spacing:0.22px"><span class="l">AUTOEXEC.BAT</span></span></span><span class="c2"><span class="l">0</span></span><span class="c3"><span class="l">MS-DO...</span></span><span class="c4"><span class="l">2003-01-01</span></span></div>
<div class="lrow"><span class="li"><svg class="i16" width="16" height="16"><use href="#i-ini"/></svg></span><span class="c1"><span class="nm" style="letter-spacing:0.36px"><span class="l">boot.ini</span></span></span><span class="c2"><span class="l">223</span></span><span class="c3"><span class="kt">구성</span><span class="l"> </span><span class="kt">설정</span></span><span class="c4"><span class="l">2006-02-07</span></span></div>
<div class="lrow"><span class="li"><svg class="i16" width="16" height="16"><use href="#i-sys"/></svg></span><span class="c1"><span class="nm" style="letter-spacing:0.24px"><span class="l">bootfont.bin</span></span></span><span class="c2"><span class="l">654336</span></span><span class="c3"><span class="l">BIN </span><span class="kt">파일</span></span><span class="c4"><span class="l">2003-01-01</span></span></div>
<div class="lrow"><span class="li"><svg class="i16" width="16" height="16"><use href="#i-sys"/></svg></span><span class="c1"><span class="nm" style="letter-spacing:0.05px"><span class="l">CONFIG.SYS</span></span></span><span class="c2"><span class="l">0</span></span><span class="c3"><span class="kt">시스템</span><span class="l"> ...</span></span><span class="c4"><span class="l">2003-01-01</span></span></div>
<div class="lrow"><span class="li"><svg class="i16" width="16" height="16"><use href="#i-fold"/></svg></span><span class="c1"><span class="nm" style="letter-spacing:-0.15px"><span class="l">DEV</span></span></span><span class="c2"><span class="l">0</span></span><span class="c3"><span class="kt">파일</span></span><span class="c4"><span class="l">2006-02-07</span></span></div>
<div class="lrow"><span class="li"><svg class="i16" width="16" height="16"><use href="#i-dat"/></svg></span><span class="c1"><span class="nm" style="letter-spacing:0.14px"><span class="l">DFIMB.DAT</span></span></span><span class="c2"><span class="l">8</span></span><span class="c3"><span class="l">GOM </span><span class="kt">미</span><span class="l">...</span></span><span class="c4"><span class="l">2006-02-07</span></span></div>
<div class="lrow"><span class="li"><svg class="i16" width="16" height="16"><use href="#i-fold"/></svg></span><span class="c1"><span class="nm"><span class="l">Documents and Settings</span></span></span><span class="c2"><span class="l">0</span></span><span class="c3"><span class="kt">파일</span></span><span class="c4"><span class="l">2006-02-07</span></span></div>
<div class="lrow"><span class="li"><svg class="i16" width="16" height="16"><use href="#i-fold"/></svg></span><span class="c1"><span class="nm" style="letter-spacing:0.22px"><span class="l">flash_recovery_area</span></span></span><span class="c2"><span class="l">0</span></span><span class="c3"><span class="kt">파일</span></span><span class="c4"><span class="l">2006-02-07</span></span></div>
<div class="lrow"><span class="li"><svg class="i16" width="16" height="16"><use href="#i-fold"/></svg></span><span class="c1"><span class="nm" style="letter-spacing:0.1px"><span class="l">Inetpub</span></span></span><span class="c2"><span class="l">0</span></span><span class="c3"><span class="kt">파일</span></span><span class="c4"><span class="l">2006-02-07</span></span></div>
<div class="lrow"><span class="li"><svg class="i16" width="16" height="16"><use href="#i-sys"/></svg></span><span class="c1"><span class="nm" style="letter-spacing:0.05px"><span class="l">IO.SYS</span></span></span><span class="c2"><span class="l">0</span></span><span class="c3"><span class="kt">시스템</span><span class="l"> ...</span></span><span class="c4"><span class="l">2003-01-01</span></span></div>
<div class="lrow sel"><span class="li"><svg class="i16" width="16" height="16"><use href="#i-folds"/></svg></span><span class="c1"><span class="nm"><span class="l">JavaRun</span></span></span><span class="c2"><span class="l">0</span></span><span class="c3"><span class="kt">파일</span></span><span class="c4"><span class="l">2006-02-07</span></span></div>
<div class="lrow"><span class="li"><svg class="i16" width="16" height="16"><use href="#i-fold"/></svg></span><span class="c1"><span class="nm" style="letter-spacing:0.63px"><span class="l">MGame</span></span></span><span class="c2"><span class="l">0</span></span><span class="c3"><span class="kt">파일</span></span><span class="c4"><span class="l">2006-02-07</span></span></div>
<div class="lrow"><span class="li"><svg class="i16" width="16" height="16"><use href="#i-sys"/></svg></span><span class="c1"><span class="nm" style="letter-spacing:0.14px"><span class="l">MSDOS.SYS</span></span></span><span class="c2"><span class="l">0</span></span><span class="c3"><span class="kt">시스템</span><span class="l"> ...</span></span><span class="c4"><span class="l">2003-01-01</span></span></div>
<div class="lrow"><span class="li"><svg class="i16" width="16" height="16"><use href="#i-fold"/></svg></span><span class="c1"><span class="nm" style="letter-spacing:0.41px"><span class="l">NETComponent</span></span></span><span class="c2"><span class="l">0</span></span><span class="c3"><span class="kt">파일</span></span><span class="c4"><span class="l">2006-02-07</span></span></div>
<div class="lrow"><span class="li"><svg class="i16" width="16" height="16"><use href="#i-com"/></svg></span><span class="c1"><span class="nm" style="letter-spacing:0.52px"><span class="l">NTDETECT.COM</span></span></span><span class="c2"><span class="l">47564</span></span><span class="c3"><span class="l">MS-DO...</span></span><span class="c4"><span class="l">2003-01-01</span></span></div>
<div class="lrow"><span class="li"><svg class="i16" width="16" height="16"><use href="#i-sys"/></svg></span><span class="c1"><span class="nm" style="letter-spacing:0.18px"><span class="l">ntldr</span></span></span><span class="c2"><span class="l">259248</span></span><span class="c3"><span class="kt">파일</span></span><span class="c4"><span class="l">2003-01-01</span></span></div>
<div class="lrow"><span class="li"><svg class="i16" width="16" height="16"><use href="#i-fold"/></svg></span><span class="c1"><span class="nm" style="letter-spacing:-0.04px"><span class="l">NVIDIA</span></span></span><span class="c2"><span class="l">0</span></span><span class="c3"><span class="kt">파일</span></span><span class="c4"><span class="l">2006-02-07</span></span></div>
<div class="lrow"><span class="li"><svg class="i16" width="16" height="16"><use href="#i-fold"/></svg></span><span class="c1"><span class="nm" style="letter-spacing:0.39px"><span class="l">oracle</span></span></span><span class="c2"><span class="l">0</span></span><span class="c3"><span class="kt">파일</span></span><span class="c4"><span class="l">2006-02-07</span></span></div>
<div class="lrow"><span class="li"><svg class="i16" width="16" height="16"><use href="#i-fold"/></svg></span><span class="c1"><span class="nm" style="letter-spacing:0.22px"><span class="l">Oracle_BACK</span></span></span><span class="c2"><span class="l">0</span></span><span class="c3"><span class="kt">파일</span></span><span class="c4"><span class="l">2006-02-07</span></span></div>
<div class="lrow"><span class="li"><svg class="i16" width="16" height="16"><use href="#i-fold"/></svg></span><span class="c1"><span class="nm" style="letter-spacing:0.1px"><span class="l">oradata</span></span></span><span class="c2"><span class="l">0</span></span><span class="c3"><span class="kt">파일</span></span><span class="c4"><span class="l">2006-02-07</span></span></div>
<div class="lrow"><span class="li"><svg class="i16" width="16" height="16"><use href="#i-fold"/></svg></span><span class="c1"><span class="nm" style="letter-spacing:-0.19px"><span class="l">OraHome_1</span></span></span><span class="c2"><span class="l">0</span></span><span class="c3"><span class="kt">파일</span></span><span class="c4"><span class="l">2006-02-07</span></span></div>
<div class="lrow"><span class="li"><svg class="i16" width="16" height="16"><use href="#i-sys"/></svg></span><span class="c1"><span class="nm" style="letter-spacing:0.49px"><span class="l">pagefile.sys</span></span></span><span class="c2"><span class="l">2145386496</span></span><span class="c3"><span class="kt">시스템</span><span class="l"> ...</span></span><span class="c4"><span class="l">2006-02-07</span></span></div>
<div class="lrow"><span class="li"><svg class="i16" width="16" height="16"><use href="#i-fold"/></svg></span><span class="c1"><span class="nm"><span class="l">Program Files</span></span></span><span class="c2"><span class="l">0</span></span><span class="c3"><span class="kt">파일</span></span><span class="c4"><span class="l">2006-02-07</span></span></div>
<div class="lrow"><span class="li"><svg class="i16" width="16" height="16"><use href="#i-fold"/></svg></span><span class="c1"><span class="nm" style="letter-spacing:-0.03px"><span class="l">RECYCLER</span></span></span><span class="c2"><span class="l">0</span></span><span class="c3"><span class="kt">파일</span></span><span class="c4"><span class="l">2006-02-07</span></span></div>
<div class="lrow"><span class="li"><svg class="i16" width="16" height="16"><use href="#i-fold"/></svg></span><span class="c1"><span class="nm" style="letter-spacing:0.15px"><span class="l">ServerProg</span></span></span><span class="c2"><span class="l">0</span></span><span class="c3"><span class="kt">파일</span></span><span class="c4"><span class="l">2006-02-07</span></span></div>
<div class="lrow"><span class="li"><svg class="i16" width="16" height="16"><use href="#i-fold"/></svg></span><span class="c1"><span class="nm" style="letter-spacing:0.44px"><span class="l">System Volume Informa...</span></span></span><span class="c2"><span class="l">0</span></span><span class="c3"><span class="kt">파일</span></span><span class="c4"><span class="l">2006-02-07</span></span></div>
<div class="lrow"><span class="li"><svg class="i16" width="16" height="16"><use href="#i-fold"/></svg></span><span class="c1"><span class="nm" style="letter-spacing:0.45px"><span class="l">TEMP</span></span></span><span class="c2"><span class="l">0</span></span><span class="c3"><span class="kt">파일</span></span><span class="c4"><span class="l">2006-02-07</span></span></div>
<div class="lrow"><span class="li"><svg class="i16" width="16" height="16"><use href="#i-fold"/></svg></span><span class="c1"><span class="nm" style="letter-spacing:0px"><span class="l">UTIL</span></span></span><span class="c2"><span class="l">0</span></span><span class="c3"><span class="kt">파일</span></span><span class="c4"><span class="l">2006-02-07</span></span></div>
<div class="lrow"><span class="li"><svg class="i16" width="16" height="16"><use href="#i-fold"/></svg></span><span class="c1"><span class="nm" style="letter-spacing:-0.65px"><span class="l">WINDOWS</span></span></span><span class="c2"><span class="l">0</span></span><span class="c3"><span class="kt">파일</span></span><span class="c4"><span class="l">2006-02-07</span></span></div>
<div class="lrow"><span class="li"><svg class="i16" width="16" height="16"><use href="#i-fold"/></svg></span><span class="c1"><span class="nm" style="letter-spacing:-0.3px"><span class="l">Work</span></span></span><span class="c2"><span class="l">0</span></span><span class="c3"><span class="kt">파일</span></span><span class="c4"><span class="l">2006-02-07</span></span></div>
<div class="lrow"><span class="li"><svg class="i16" width="16" height="16"><use href="#i-fold"/></svg></span><span class="c1"><span class="nm"><span class="kt">소스</span></span></span><span class="c2"><span class="l">0</span></span><span class="c3"><span class="kt">파일</span></span><span class="c4"><span class="l">2006-02-07</span></span></div>
  </div>
  <div id="sb"><div class="sbtn" style="top:1px"><svg width="15" height="16"><path d="M4 10l3.5-3.5L11 10" fill="none" stroke="#4D6185" stroke-width="2"/></svg></div><div id="thumb"><i></i></div><div class="sbtn" style="bottom:-1px"><svg width="15" height="16"><path d="M4 6l3.5 3.5L11 6" fill="none" stroke="#4D6185" stroke-width="2"/></svg></div></div>
 </div></div>
 <div id="split"></div>
 <div id="st">
  <span class="t"><span class="kt">준비</span></span>
  <span class="p" style="left:826px;width:31px"></span>
  <span class="p" style="left:859px;width:34px;text-align:center;line-height:14px"><span class="l">NUM</span></span>
  <span class="p" style="left:895px;width:38px"></span>
  <svg style="position:absolute;right:1px;bottom:1px" width="13" height="13"><path d="M12 1L1 12M12 5L5 12M12 9L9 12" stroke="#ACA899" stroke-width="1.5"/><path d="M13 1L1 13M13 5L5 13M13 9L9 13" stroke="#fff" stroke-width="1" opacity=".9"/></svg>
 </div>
</div>
</body>
</html>
